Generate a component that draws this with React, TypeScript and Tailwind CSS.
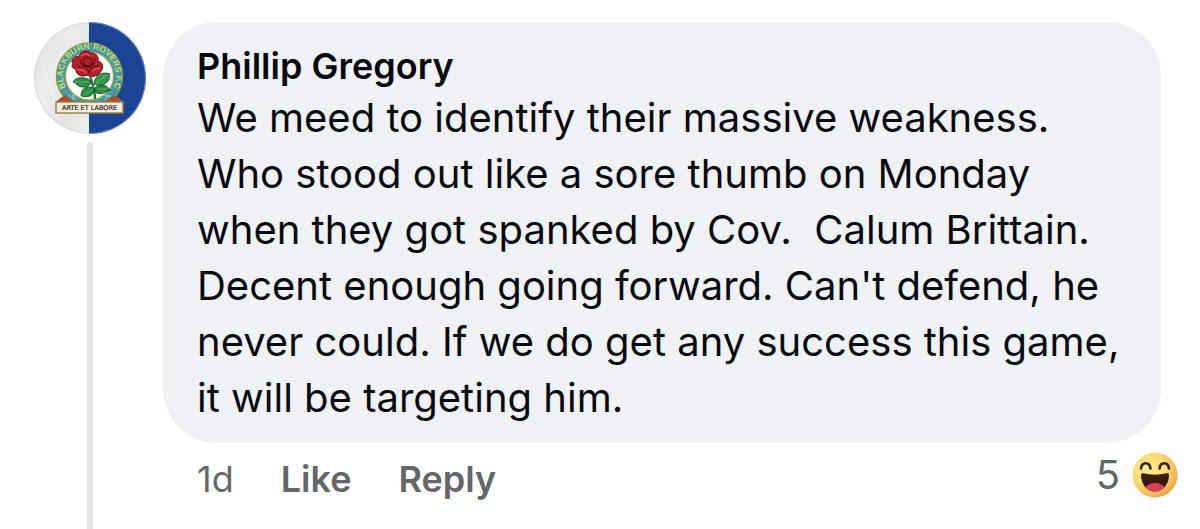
import React, { useState } from 'react';

const comment = {
  author: 'Phillip Gregory',
  text: "We meed to identify their massive weakness. Who stood out like a sore thumb on Monday when they got spanked by Cov.  Calum Brittain. Decent enough going forward. Can't defend, he never could. If we do get any success this game, it will be targeting him.",
  age: '1d',
  reactions: 5,
};

const ClubBadge: React.FC = () => (
  <svg viewBox="0 0 112 112" className="size-28 shrink-0" role="img" aria-label="Blackburn Rovers F.C.">
    <defs>
      <clipPath id="disc">
        <circle cx="56" cy="56" r="56" />
      </clipPath>
      <linearGradient id="cloth" x1="0" y1="0" x2="1" y2="1">
        <stop offset="0" stopColor="#dededf" />
        <stop offset="0.4" stopColor="#ececed" />
        <stop offset="0.7" stopColor="#e2e2e4" />
        <stop offset="1" stopColor="#efeff0" />
      </linearGradient>
      <path id="ring" d="M35.5 71 A26.5 26.5 0 1 1 75.5 71" />
    </defs>
    <g clipPath="url(#disc)">
      <rect width="56" height="112" fill="url(#cloth)" />
      <rect x="55" width="57" height="112" fill="#1b4494" />
      <path d="M3 72 L26 98 M8 42 L22 80" stroke="#f6f6f6" strokeWidth="3" opacity="0.4" />
    </g>
    <circle cx="56" cy="56" r="55.5" fill="none" stroke="#c9ccd3" strokeOpacity="0.5" />
    <circle cx="55.5" cy="54" r="33" fill="#4797a6" stroke="#8f9445" strokeWidth="1.5" />
    <circle cx="55.5" cy="54" r="24" fill="#fdfdfb" stroke="#9ba951" strokeWidth="1.2" />
    <text fontSize="8.5" fontWeight="700" fill="#c3dd68" className="font-[Liberation_Sans,sans-serif]">
      <textPath href="#ring" startOffset="50%" textAnchor="middle">BLACKBURN ROVERS F.C</textPath>
    </text>
    {/* foliage */}
    <path d="M55 50 C57 59 61 66 61 77" fill="none" stroke="#217a36" strokeWidth="2.4" />
    <path d="M57 59 C51 54 41 55 39 60 C43 61 43 65 49 65 C54 65 57 63 57 59Z" fill="#2c9147" stroke="#12552a" strokeWidth="0.9" />
    <path d="M59 66 C52 63 47 67 47 74 C54 76 60 74 60 67Z" fill="#299147" stroke="#12552a" strokeWidth="0.9" />
    <path d="M60 62 C61 53 68 49 76 52 C74 55 77 57 73 60 C69 64 64 64 60 62Z" fill="#329a4c" stroke="#12552a" strokeWidth="0.9" />
    <path d="M61 66 C66 61 73 63 76 68 C71 70 67 74 61 70Z" fill="#2b8d43" stroke="#12552a" strokeWidth="0.9" />
    <path d="M41 60 L55 60 M50 73 L59 67 M62 61 L73 53 M63 67 L73 67" stroke="#7cc27a" strokeWidth="0.7" />
    {/* rose */}
    <path d="M39 42 C36 38 41 33 45 35 C46 29 53 27 57 31 C62 31 65 34 64 39 C69 40 70 46 67 49 C65 54 58 56 54 53 C47 56 41 52 42 47 C38 47 37 43 39 42Z" fill="#b5202a" stroke="#69121a" strokeWidth="1" />
    <path d="M49 38 C53 33 59 36 58 41 C56 46 49 44 49 38Z M44 45 C50 43 55 47 56 52 M65 44 C59 43 56 47 55 51 M46 37 C46 42 50 45 55 45 C60 43 62 39 61 36" fill="none" stroke="#630d18" strokeWidth="1.1" />
    <path d="M47 34 C50 31 54 32 56 34 M43 48 C47 47 50 49 52 51 M58 49 C61 46 65 47 66 46" fill="none" stroke="#e45a57" strokeWidth="1.3" />
    <text x="34" y="78" fontSize="6.500" fontWeight="700" fill="#79dbe8" className="font-[Liberation_Sans,sans-serif]">18</text>
    <text x="70" y="78" fontSize="6.500" fontWeight="700" fill="#79dbe8" className="font-[Liberation_Sans,sans-serif]">75</text>
    {/* motto scroll */}
    <path d="M22 80 L31 73 L41 80Z M89 80 L80 73 L70 80Z" fill="#b8442f" stroke="#718044" strokeWidth="1" />
    <rect x="22" y="80" width="67" height="11" fill="#f6eedc" stroke="#95823b" strokeWidth="1.4" />
    <text x="55.5" y="88" textAnchor="middle" fontSize="6.500" fill="#282323" stroke="#282323" strokeWidth="0.2" className="font-[DejaVu_Sans,sans-serif]">ARTE ET LABORE</text>
  </svg>
);

const HahaIcon: React.FC = () => (
  <svg viewBox="0 0 46 46" className="size-[46px] shrink-0" role="img" aria-label="Haha">
    <defs>
      <radialGradient id="face" cx="0.36" cy="0.36" r="0.7">
        <stop offset="0" stopColor="#ffed8b" />
        <stop offset="0.5" stopColor="#fbdc78" />
        <stop offset="0.82" stopColor="#f4bd5e" />
        <stop offset="1" stopColor="#eb9a45" />
      </radialGradient>
      <linearGradient id="mouth" x1="0" y1="0" x2="0" y2="1">
        <stop offset="0" stopColor="#452412" />
        <stop offset="1" stopColor="#2a1008" />
      </linearGradient>
      <clipPath id="lips">
        <path d="M9 23 C9 20.8 11 21 13 21.5 C19 23 27 23 33 21.5 C35 21 37 20.8 37 23 C37 32 31 39.5 23 39.5 C15 39.5 9 32 9 23Z" />
      </clipPath>
    </defs>
    <circle cx="23" cy="23" r="22.5" fill="url(#face)" />
    <path d="M9 16.5 C10 9.5 17.5 9.5 18.5 16.5 M27.5 16.5 C28.5 9.5 36 9.5 37 16.5" fill="none" stroke="#2d2313" strokeWidth="2.6" strokeLinecap="round" />
    <g clipPath="url(#lips)">
      <rect x="8" y="19" width="30" height="22" fill="url(#mouth)" />
      <ellipse cx="23" cy="38" rx="10.5" ry="7" fill="#dd4051" />
    </g>
  </svg>
);

const App: React.FC = () => {
  const [liked, setLiked] = useState<boolean>(false);

  return (
    <main className="flex min-h-screen gap-[17px] bg-white pl-[34px] pr-[39px] pt-[22px] font-[Inter,sans-serif]">
      <div className="flex shrink-0 flex-col items-center gap-2">
        <ClubBadge />
        <div className="w-1.5 grow rounded-t-full bg-[#e4e4e5]" />
      </div>
      <article className="min-w-0 grow">
        <div className="rounded-[54px] bg-[#f0f1f5] pb-[17px] pl-[34px] pr-5 pt-5 text-[#080a0f]">
          <h2 className="text-[36px] font-semibold leading-[48px]">{comment.author}</h2>
          <p className="whitespace-pre-wrap text-[40px] leading-[56px]">{comment.text}</p>
        </div>
        <div className="flex items-start justify-between pl-[34px] pt-2 text-[#656668]">
          <div className="flex items-center gap-[47px] text-[36px] leading-[56px]">
            <span>{comment.age}</span>
            <button type="button" className="font-semibold" onClick={() => setLiked(!liked)} aria-pressed={liked}>Like</button>
            <button type="button" className="font-semibold">Reply</button>
          </div>
          <button type="button" className="-mr-[17px] flex items-center gap-3 text-[40px] leading-[48px]">
            <span>{comment.reactions}</span>
            <HahaIcon />
          </button>
        </div>
      </article>
    </main>
  );
};

export default App;
